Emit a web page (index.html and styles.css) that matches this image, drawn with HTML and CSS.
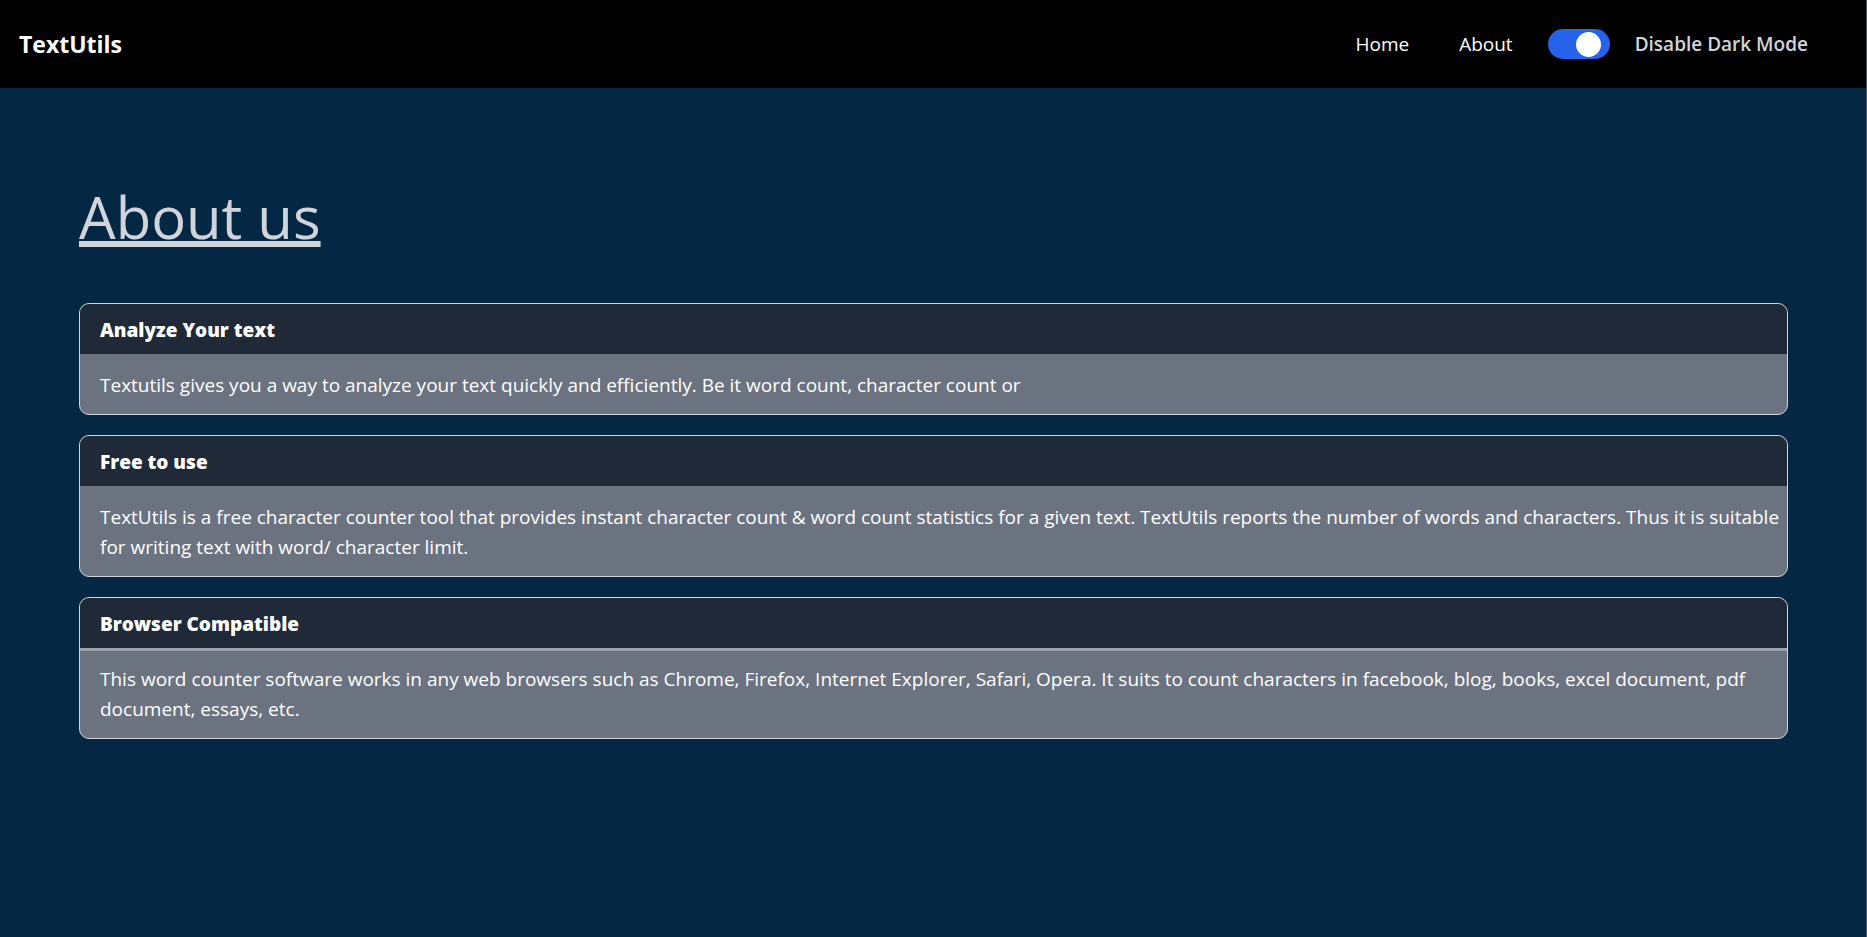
FILE: index.html
```html
<!DOCTYPE html>
<html lang="en">
<head>
<meta charset="utf-8">
<meta name="viewport" content="width=device-width, initial-scale=1">
<title>TextUtils - About</title>
<link rel="stylesheet" href="styles.css">
</head>
<body>
<header class="navbar">
  <a class="brand" href="#">TextUtils</a>
  <nav class="links">
    <a class="link" href="#">Home</a>
    <a class="link" href="#about">About</a>
  </nav>
  <label class="mode">
    <input class="switch" type="checkbox" role="switch" checked>
    <span>Disable Dark Mode</span>
  </label>
</header>
<main class="content" id="about">
  <h1 class="title">About us</h1>
  <div class="cards">
    <section class="card">
      <h2 class="card-head"><button class="card-button" type="button">Analyze Your text</button></h2>
      <p class="card-body">Textutils gives you a way to analyze your text quickly and efficiently. Be it word count, character count or</p>
    </section>
    <section class="card">
      <h2 class="card-head"><button class="card-button" type="button">Free to use</button></h2>
      <p class="card-body">TextUtils is a free character counter tool that provides instant character count &amp; word count statistics for a given text. TextUtils reports the number of words and characters. Thus it is suitable for writing text with word/ character limit.</p>
    </section>
    <section class="card">
      <h2 class="card-head"><button class="card-button" type="button">Browser Compatible</button></h2>
      <p class="card-body card-body-ruled">This word counter software works in any web browsers such as Chrome, Firefox, Internet Explorer, Safari, Opera. It suits to count characters in facebook, blog, books, excel document, pdf document, essays, etc.</p>
    </section>
  </div>
</main>
</body>
</html>
```
FILE: styles.css
```css
* { box-sizing: border-box; margin: 0; }
body {
  min-height: 100vh;
  border-right: 1px solid #45545f;
  background: #042743;
  color: #fff;
  font-family: "Segoe UI", "Open Sans", "Noto Sans", sans-serif;
  font-size: 19px;
  line-height: 30px;
}
.navbar {
  display: flex;
  align-items: center;
  height: 88px;
  padding: 0 58px 0 19px;
  background: #000;
}
.brand { color: #fff; font-size: 23px; font-weight: 700; text-decoration: none; }
.links { display: flex; gap: 50px; margin-left: auto; margin-right: 35px; }
.link { color: #fff; text-decoration: none; }
.mode { display: flex; align-items: center; gap: 25px; color: #d1d5db; font-weight: 600; }
.switch {
  appearance: none;
  display: flex;
  justify-content: flex-end;
  width: 62px;
  height: 30px;
  margin: 0;
  padding: 3px 9px 2px;
  border-radius: 15px;
  background: #2563eb;
}
.switch::before { content: ""; width: 25px; height: 25px; border-radius: 50%; background: #fff; }
.switch:not(:checked) { justify-content: flex-start; background: #6b7280; }
.content { padding: 91px 78px 90px 79px; }
.title {
  color: #d1d5db;
  font-size: 58px;
  font-weight: 400;
  line-height: 75px;
  text-decoration: underline;
  text-decoration-thickness: 6px;
  text-underline-offset: 2px;
  text-decoration-skip-ink: none;
}
.cards { display: flex; flex-direction: column; gap: 20px; margin-top: 49px; }
.card { overflow: hidden; border: 1px solid #d1d5db; border-radius: 10px; background: #6b7280; }
.card-head { font-size: 19px; background: #1f2937; }
.card-button {
  display: block;
  width: 100%;
  padding: 11px 20px 9px;
  border: 0;
  background: none;
  color: #fff;
  font: inherit;
  font-weight: 800;
  text-align: left;
}
.card-body { padding: 16px 0 14px 20px; }
.card-body-ruled { box-shadow: inset 0 3px #9ca3af; }
```
